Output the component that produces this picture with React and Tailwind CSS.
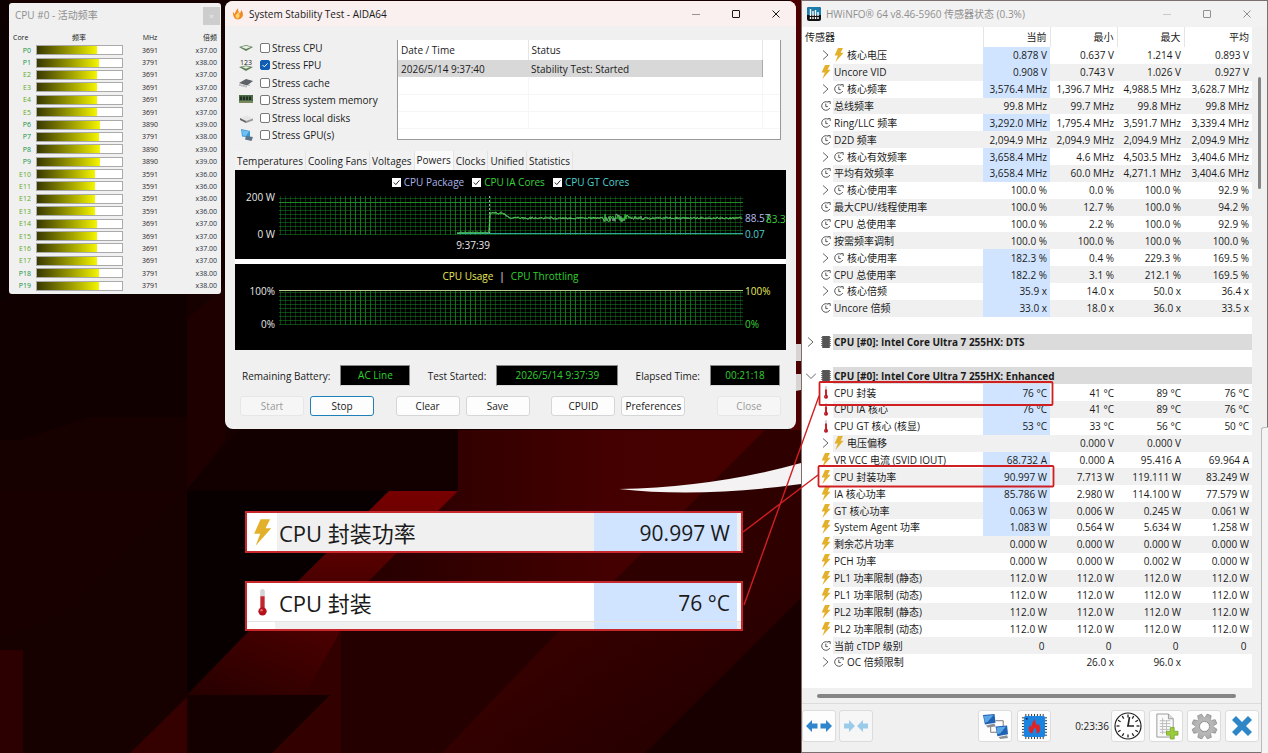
import React, { useState } from 'react';

const cores = [
  ['P0', 3691], ['P1', 3791], ['E2', 3691], ['E3', 3691], ['E4', 3691],
  ['E5', 3691], ['P6', 3890], ['P7', 3791], ['P8', 3890], ['P9', 3890],
  ['E10', 3591], ['E11', 3591], ['E12', 3591], ['E13', 3591], ['E14', 3691],
  ['E15', 3691], ['E16', 3691], ['E17', 3691], ['P18', 3791], ['P19', 3791],
];

// group: expandable child row, section: device header, hot: highlighted current value
const sensors = [
  { icon: 'bolt', name: '核心电压', v: ['0.878 V', '0.637 V', '1.214 V', '0.893 V'], group: true, hot: true },
  { icon: 'bolt', name: 'Uncore VID', v: ['0.908 V', '0.743 V', '1.026 V', '0.927 V'], hot: true },
  { icon: 'clock', name: '核心频率', v: ['3,576.4 MHz', '1,396.7 MHz', '4,988.5 MHz', '3,628.7 MHz'], group: true, hot: true },
  { icon: 'clock', name: '总线频率', v: ['99.8 MHz', '99.7 MHz', '99.8 MHz', '99.8 MHz'] },
  { icon: 'clock', name: 'Ring/LLC 频率', v: ['3,292.0 MHz', '1,795.4 MHz', '3,591.7 MHz', '3,339.4 MHz'], hot: true },
  { icon: 'clock', name: 'D2D 频率', v: ['2,094.9 MHz', '2,094.9 MHz', '2,094.9 MHz', '2,094.9 MHz'] },
  { icon: 'clock', name: '核心有效频率', v: ['3,658.4 MHz', '4.6 MHz', '4,503.5 MHz', '3,404.6 MHz'], group: true, hot: true },
  { icon: 'clock', name: '平均有效频率', v: ['3,658.4 MHz', '60.0 MHz', '4,271.1 MHz', '3,404.6 MHz'], hot: true },
  { icon: 'clock', name: '核心使用率', v: ['100.0 %', '0.0 %', '100.0 %', '92.9 %'], group: true },
  { icon: 'clock', name: '最大CPU/线程使用率', v: ['100.0 %', '12.7 %', '100.0 %', '94.2 %'] },
  { icon: 'clock', name: 'CPU 总使用率', v: ['100.0 %', '2.2 %', '100.0 %', '92.9 %'] },
  { icon: 'clock', name: '按需频率调制', v: ['100.0 %', '100.0 %', '100.0 %', '100.0 %'] },
  { icon: 'clock', name: '核心使用率', v: ['182.3 %', '0.4 %', '229.3 %', '169.5 %'], group: true, hot: true },
  { icon: 'clock', name: 'CPU 总使用率', v: ['182.2 %', '3.1 %', '212.1 %', '169.5 %'], hot: true },
  { icon: 'clock', name: '核心倍频', v: ['35.9 x', '14.0 x', '50.0 x', '36.4 x'], group: true, hot: true },
  { icon: 'clock', name: 'Uncore 倍频', v: ['33.0 x', '18.0 x', '36.0 x', '33.5 x'], hot: true },
  { blank: true },
  { section: 'closed', name: 'CPU [#0]: Intel Core Ultra 7 255HX: DTS' },
  { blank: true },
  { section: 'open', name: 'CPU [#0]: Intel Core Ultra 7 255HX: Enhanced' },
  { icon: 'temp', name: 'CPU 封装', v: ['76 °C', '41 °C', '89 °C', '76 °C'], hot: true },
  { icon: 'temp', name: 'CPU IA 核心', v: ['76 °C', '41 °C', '89 °C', '76 °C'], hot: true },
  { icon: 'temp', name: 'CPU GT 核心 (核显)', v: ['53 °C', '33 °C', '56 °C', '50 °C'], hot: true },
  { icon: 'bolt', name: '电压偏移', v: ['', '0.000 V', '0.000 V', ''], group: true },
  { icon: 'bolt', name: 'VR VCC 电流 (SVID IOUT)', v: ['68.732 A', '0.000 A', '95.416 A', '69.964 A'], hot: true },
  { icon: 'bolt', name: 'CPU 封装功率', v: ['90.997 W', '7.713 W', '119.111 W', '83.249 W'], hot: true },
  { icon: 'bolt', name: 'IA 核心功率', v: ['85.786 W', '2.980 W', '114.100 W', '77.579 W'], hot: true },
  { icon: 'bolt', name: 'GT 核心功率', v: ['0.063 W', '0.006 W', '0.245 W', '0.061 W'], hot: true },
  { icon: 'bolt', name: 'System Agent 功率', v: ['1.083 W', '0.564 W', '5.634 W', '1.258 W'], hot: true },
  { icon: 'bolt', name: '剩余芯片功率', v: ['0.000 W', '0.000 W', '0.000 W', '0.000 W'] },
  { icon: 'bolt', name: 'PCH 功率', v: ['0.000 W', '0.000 W', '0.002 W', '0.000 W'] },
  { icon: 'bolt', name: 'PL1 功率限制 (静态)', v: ['112.0 W', '112.0 W', '112.0 W', '112.0 W'] },
  { icon: 'bolt', name: 'PL1 功率限制 (动态)', v: ['112.0 W', '112.0 W', '112.0 W', '112.0 W'] },
  { icon: 'bolt', name: 'PL2 功率限制 (静态)', v: ['112.0 W', '112.0 W', '112.0 W', '112.0 W'] },
  { icon: 'bolt', name: 'PL2 功率限制 (动态)', v: ['112.0 W', '112.0 W', '112.0 W', '112.0 W'] },
  { icon: 'clock', name: '当前 cTDP 级别', v: ['0 ', '0 ', '0 ', '0 '] },
  { icon: 'clock', name: 'OC 倍频限制', v: ['', '26.0 x', '96.0 x', ''], group: true },
  { blank: true },
];

/* ---------- small icons ---------- */

const Bolt = ({ className = 'h-[14px] w-[10px]' }) => (
  <svg viewBox="0 0 10 14" className={className}>
    <path d="M4 0 H9 L6.6 4.8 H9.6 L1.4 14 L3.8 7.6 H0.6 Z" fill="#e3b02c" />
  </svg>
);

const ClockArrow = () => (
  <svg viewBox="0 0 10 10" className="h-[10px] w-[10px]" fill="none" stroke="#444" strokeWidth="0.9">
    <path d="M8.8 7 A4.3 4.3 0 1 1 7.2 1.3" />
    <path d="M4.8 2.6 V5.6 H6.8 M6.8 0.6 H9.2 V3" />
  </svg>
);

const Thermo = ({ className = 'h-[13px] w-[10px]' }) => (
  <svg viewBox="0 0 10 26" className={className} preserveAspectRatio="xMidYMid meet">
    <rect x="2.8" y="0" width="4.4" height="20" rx="2.2" fill="#d4d4d4" />
    <rect x="3" y="7" width="4" height="14" fill="#c4262b" />
    <circle cx="5" cy="21.5" r="4" fill="#b5121b" />
    <circle cx="4" cy="20.5" r="1.2" fill="#e56a6e" />
  </svg>
);

const Chip = () => (
  <svg viewBox="0 0 10 12" className="h-[12px] w-[10px]">
    <path d="M0 1.5H10M0 3.5H10M0 5.5H10M0 7.5H10M0 9.5H10" stroke="#888" />
    <rect x="1.2" y="0" width="7.6" height="12" fill="#555" />
  </svg>
);

const Chevron = ({ open }) => (
  <svg viewBox="0 0 10 10" className="h-[10px] w-[10px]" fill="none" stroke="#555" strokeWidth="0.9">
    <path d={open ? 'M0 2.5 L5 7.5 L10 2.5' : 'M2 0.5 L7 5 L2 9.5'} />
  </svg>
);

const icons = { bolt: <Bolt />, clock: <ClockArrow />, temp: <Thermo /> };

const WindowButtons = ({ color, dim }) => (
  <div className="ml-auto flex self-stretch">
    {[
      ['Minimize', 'M1 5.5 H9', true],
      ['Maximize', 'M2 1.5 H8 Q8.5 1.5 8.5 2 V8 Q8.5 8.5 8 8.5 H2 Q1.5 8.5 1.5 8 V2 Q1.5 1.5 2 1.5 Z', false],
      ['Close', 'M1.5 1.5 L8.5 8.5 M8.5 1.5 L1.5 8.5', false],
    ].map(([label, d, faint]) => (
      <button key={label} aria-label={label} className="flex w-10 items-center justify-center">
        <svg viewBox="0 0 10 10" className="h-[10px] w-[10px]" fill="none" stroke={faint ? dim : color}>
          <path d={d} />
        </svg>
      </button>
    ))}
  </div>
);

/* ---------- wallpaper ---------- */

const Wallpaper = () => (
  <svg className="absolute inset-0 h-full w-full" viewBox="0 0 1268 753" preserveAspectRatio="xMinYMin slice">
    <defs>
      <linearGradient id="wallRight" x1="0" y1="0" x2="1" y2="1">
        <stop offset="0" stopColor="#2c0000" />
        <stop offset="0.4" stopColor="#3e0000" />
        <stop offset="1" stopColor="#1e0000" />
      </linearGradient>
      <linearGradient id="wallUpper" x1="0" y1="0" x2="1" y2="0">
        <stop offset="0" stopColor="#260000" />
        <stop offset="0.6" stopColor="#440000" />
        <stop offset="1" stopColor="#460000" />
      </linearGradient>
      <linearGradient id="wallBand" x1="0" y1="0" x2="0" y2="1">
        <stop offset="0" stopColor="#780000" />
        <stop offset="1" stopColor="#4a0000" />
      </linearGradient>
      <linearGradient id="wallLow" x1="1" y1="0" x2="0" y2="1">
        <stop offset="0" stopColor="#4c0000" />
        <stop offset="1" stopColor="#260000" />
      </linearGradient>
    </defs>
    <rect width="1268" height="753" fill="#160000" />
    <path d="M0 294 H187 V417 H90 L20 440 H0 Z" fill="#110000" />
    <path d="M187 320 L225 285 V440 L187 490 Z" fill="#1e0000" />
    <path d="M20 490 H185 L70 610 L0 640 V490 Z" fill="#190000" />
    <path d="M187 490 L240 430 H458 V490 L187 700 Z" fill="#0d0000" />
    <rect x="341" y="430" width="460" height="323" fill="url(#wallRight)" />
    <path d="M240 430 H458 V491 H187 Z" fill="#120000" />
    <path d="M187 491 H389 L187 692 Z" fill="#080000" />
    <path d="M389 491 H458 L368 582 H297 Z" fill="url(#wallBand)" />
    <path d="M458 491 V430 H765 L610 585 H365 Z" fill="url(#wallUpper)" />
    <path d="M765 430 H801 V560 L745 600 L610 585 Z" fill="#2e0000" />
    <path d="M250 630 H341 V695 H187 Z" fill="url(#wallLow)" />
    <path d="M341 630 V753 H272 Z" fill="#330000" />
    <path d="M187 695 H330 L272 753 H187 Z" fill="#150000" />
    <path d="M187 697 V753 H130 Z" fill="#340000" />
    <path d="M341 630 H560 L442 753 H341 Z" fill="#240000" />
    <path d="M645 753 L801 598 V753 Z" fill="#190000" />
    <rect x="0" y="650" width="23" height="103" fill="#2c0000" />
    <rect x="0" y="0" width="9" height="300" fill="#0c0000" />
    <rect x="790" y="0" width="12" height="430" fill="#4c0000" />
    <path d="M619 489 Q715 487 801 463 V484 Q700 498 619 489 Z" fill="#f4f2f2" />
    <path d="M790 344 H801 V361 H790 Z M790 374 H801 V390 L790 392 Z" fill="#d8d4d4" />
  </svg>
);

/* ---------- CPU frequency window ---------- */

const CpuWindow = () => (
  <section className="absolute left-[9px] top-[3px] w-[212px] overflow-hidden rounded-[3px] bg-[#f0f0f0] pb-[2px]">
    <header className="flex h-6 items-center pl-[6px] text-[10px] text-[#8f8f8f]">
      CPU #0 - 活动频率
      <button aria-label="Close" className="ml-auto mr-[1px] mt-[2px] h-[18px] w-[17px] bg-[#cdcdcd] text-[8px] text-[#eee]">×</button>
    </header>
    <table className="h-[265px] w-full table-fixed border-collapse text-[7px] leading-[9px]">
      <thead>
        <tr className="h-[17px]">
          <th className="w-[24px] pt-1 pl-1 text-left font-normal">Core</th>
          <th className="w-[92px] pt-1 font-normal">频率</th>
          <th className="w-[50px] pt-1 font-normal">MHz</th>
          <th className="pt-1 pr-1 text-right font-normal">倍频</th>
        </tr>
      </thead>
      <tbody>
        {cores.map(([name, mhz]) => (
          <tr key={name}>
            <td className={`p-0 pr-[2px] text-right ${name[0] === 'P' ? 'text-[#14913f]' : 'text-[#66a81e]'}`}>{name}</td>
            <td className="p-0 pl-[3px] pr-[2px]">
              <div className="h-[10px] border border-[#aaa] bg-white">
                <div
                  className="h-full bg-linear-to-r from-[#3a3a00] to-[#f6f600]"
                  style={{ width: `${(mhz / 5230) * 100}%` }}
                />
              </div>
            </td>
            <td className="p-0 text-center text-[#2b2222]">{mhz}</td>
            <td className="p-0 pr-1 text-right text-[#2b3040]">x{Math.round(mhz / 99.8)}.00</td>
          </tr>
        ))}
      </tbody>
    </table>
  </section>
);

/* ---------- stability test window ---------- */

const stressIcons = {
  cpu: <><path d="M1 6 L8 4 L15 6 L8 10 Z" fill="#5d7f56" /><path d="M3 6 L8 4.8 L13 6 L8 8 Z" fill="#e8eee4" /></>,
  fpu: <><text x="8" y="6.5" fontSize="7" textAnchor="middle" fill="#222">123</text><path d="M1 9 L8 7.5 L15 9 L8 13 Z" fill="#5d7f56" /><path d="M4 9 L8 8.2 L12 9 L8 10.8 Z" fill="#e8eee4" /></>,
  cache: <><path d="M1 7 L8 3 L15 5 L9 9.5 Z" fill="#5c6268" /><path d="M2 8 V10 M4 8.6 V10.6 M6 9 V11 M8 9.6 V11.4 M11 8.4 V10" stroke="#8b9096" /></>,
  memory: <><rect x="1" y="2" width="14" height="8" fill="#4a6a48" /><path d="M3 3.5V7M6 3.5V7M9 3.5V7M12 3.5V7" stroke="#1f2a1e" strokeWidth="1.8" /><path d="M1 9H15" stroke="#a9a871" /></>,
  disk: <><path d="M2 7 L9 4.5 L15 7.5 L8 10 Z" fill="#e5e5e5" /><path d="M2 7 L8 10 V12 L2 9 Z" fill="#666" /><path d="M8 10 L15 7.5 V9.5 L8 12 Z" fill="#999" /></>,
  gpu: <><path d="M3 1 L12 3 L12 9.5 L4 8.5 Z" fill="#3c97d8" /><path d="M4 2 L11 3.6 L8 8 L4.6 7.6 Z" fill="#6fc0f0" /><path d="M8 8 L15 9 L13.5 13 L7 11.5 Z" fill="#5e7488" /></>,
};

const StressOption = ({ id, label, checked }) => {
  const [on, setOn] = useState(checked);
  return (
    <label className="flex flex-1 items-center whitespace-nowrap">
      <svg viewBox="0 0 16 14" className="h-[14px] w-[16px]">{stressIcons[id]}</svg>
      <input
        type="checkbox"
        checked={on}
        onChange={() => setOn(!on)}
        className="peer ml-[6px] h-[10px] w-[10px] appearance-none rounded-[2px] border border-[#777] bg-white checked:border-[#0f5db4] checked:bg-[#0f5db4]"
      />
      <svg viewBox="0 0 10 10" className="-ml-[10px] hidden h-[10px] w-[10px] peer-checked:block" fill="none" stroke="#fff">
        <path d="M2.5 5 L4.3 6.8 L7.6 3.4" />
      </svg>
      <span className="ml-[2px]">{label}</span>
    </label>
  );
};

const ChartToggle = ({ label, color }) => (
  <label className={`flex items-center gap-[3px] ${color}`}>
    <span className="relative flex">
      <input type="checkbox" defaultChecked className="h-[9px] w-[9px] appearance-none bg-white" />
      <svg viewBox="0 0 9 9" className="pointer-events-none absolute inset-0 h-[9px] w-[9px]" fill="none" stroke="#222">
        <path d="M1.8 4.5 L3.8 6.6 L7.4 2.4" />
      </svg>
    </span>
    {label}
  </label>
);

const Grid = ({ top, bottom }) => {
  const vertical = [];
  for (let x = 45; x < 508; x += 5) {
    const o = 0.35 + 0.5 * Math.pow(Math.cos(((x - 123) / 107) * Math.PI), 4);
    vertical.push(<path key={`v${x}`} d={`M${x}.5 ${top} V${bottom}`} strokeOpacity={o} />);
  }
  const horizontal = [];
  for (let y = bottom; y > top; y -= 4) {
    horizontal.push(<path key={`h${y}`} d={`M44 ${y - 0.5} H508`} strokeOpacity="0.5" />);
  }
  return <g stroke="#178a26">{vertical}{horizontal}</g>;
};

// package power history: idle, spike at test start, then steady load
const powerLine = (shift) => {
  let d = 'M222 42';
  for (let x = 224; x < 255; x += 2) d += ` L${x} ${42 - (x % 4 ? 1 : 0)}`;
  for (let x = 255; x < 508; x += 1) {
    const noise = Math.sin(x * 12.9898 + shift) * 43758.5453;
    const r = noise - Math.floor(noise) - 0.5;
    const base = x < 267 ? 22 : x < 275 ? 22 + (x - 267) * 0.6 : 27;
    const amp = x > 368 && x < 394 ? 8 : x > 394 && x < 410 ? 4 : 2.4;
    d += ` L${x} ${(base + r * amp).toFixed(1)}`;
  }
  return d;
};

const PowerChart = () => (
  <svg viewBox="0 0 551 68" className="block w-full" fontSize="10" fill="none">
    <Grid top={5} bottom={44} />
    <path d="M44 11.5 H508" stroke="#1c9a2a" strokeOpacity="0.8" />
    <path d="M254.5 5 V43" stroke="#cfd8cf" strokeDasharray="2 2" strokeOpacity="0.8" />
    <path d="M222 42.5 H508" stroke="#2fa79a" />
    <path d={powerLine(0)} stroke="#a5c7b0" strokeWidth="0.7" />
    <path d={powerLine(1.4)} stroke="#35d13d" strokeWidth="0.8" />
    <g fill="#e8e8e8" textAnchor="end">
      <text x="40" y="10">200 W</text>
      <text x="40" y="47">0 W</text>
      <text x="255" y="58">9:37:39</text>
    </g>
    <text x="510" y="31" fill="#b4bdf2">88.57</text>
    <text x="531" y="32" fill="#3bd13b">83.39</text>
    <text x="510" y="47" fill="#4fd0d0">0.07</text>
  </svg>
);

const UsageChart = () => (
  <svg viewBox="0 0 551 65" className="block w-full" fontSize="10" fill="none">
    <Grid top={6} bottom={40} />
    <path d="M44 5.5 H508" stroke="#b9c98a" />
    <g fill="#e8e8e8" textAnchor="end">
      <text x="40" y="10">100%</text>
      <text x="40" y="43">0%</text>
    </g>
    <text x="510" y="10" fill="#e8e85a">100%</text>
    <text x="510" y="43" fill="#3bd13b">0%</text>
  </svg>
);

const tabs = ['Temperatures', 'Cooling Fans', 'Voltages', 'Powers', 'Clocks', 'Unified', 'Statistics'];

const Readout = ({ label, value, width }) => (
  <div className="flex items-center gap-[10px]">
    <span>{label}</span>
    <output className={`border border-[#888] border-b-[#ddd] bg-black text-center leading-[19px] text-[#2fd12f] ${width}`}>{value}</output>
  </div>
);

const PushButton = ({ children, border = 'border-[#d6d6d6]', ...rest }) => (
  <button
    className={`h-5 w-16 rounded-[3px] border bg-[#fdfdfd] disabled:border-[#e6e6e6] disabled:bg-[#f6f6f6] disabled:text-[#9a9a9a] ${border}`}
    {...rest}
  >
    {children}
  </button>
);

const StabilityWindow = () => {
  const [tab, setTab] = useState('Powers');
  return (
    <section className="absolute left-[225px] top-[1px] w-[571px] overflow-hidden rounded-lg bg-[#f0f0f0] text-[10px] leading-[14px] text-[#1a1a1a]">
      <header className="flex h-[25px] items-center bg-[#f9f0ef]">
        <svg viewBox="0 0 14 14" className="ml-[7px] mr-[5px] h-[13px] w-[12px]">
          <path d="M1 5 Q3 7 3 8 Q4 4 7 1 Q7 5 9 7 Q10 6 11 3 Q14 8 12 11 Q10 14 6 14 Q1 13 1 5Z" fill="#f08a24" />
          <path d="M4 9 Q6 8 7 5 Q9 8 9 10 Q8 13 6 13 Q4 12 4 9Z" fill="#ffd36b" />
        </svg>
        <h1>System Stability Test - AIDA64</h1>
        <WindowButtons color="#1a1a1a" dim="#9a9292" />
      </header>

      <div className="flex justify-between pl-[13px] pr-[15px] pt-[13px]">
        <div className="flex h-[105px] flex-col">
          <StressOption id="cpu" label="Stress CPU" checked={false} />
          <StressOption id="fpu" label="Stress FPU" checked />
          <StressOption id="cache" label="Stress cache" checked={false} />
          <StressOption id="memory" label="Stress system memory" checked={false} />
          <StressOption id="disk" label="Stress local disks" checked={false} />
          <StressOption id="gpu" label="Stress GPU(s)" checked={false} />
        </div>
        <div className="mt-[1px] h-[100px] w-[384px] border border-t-0 border-[#999] bg-white">
          <table className="w-full table-fixed border-collapse text-left">
            <thead>
              <tr className="h-5">
                <th className="w-[130px] border-r border-[#e5e5e5] pl-[3px] font-normal">Date / Time</th>
                <th className="border-r border-[#e5e5e5] pl-[3px] font-normal">Status</th>
                <th className="w-[18px]"></th>
              </tr>
            </thead>
            <tbody>
              <tr className="h-[17px]">
                <td className="bg-[#d8d8d8] pl-[3px]">2026/5/14 9:37:40</td>
                <td className="border-r border-[#aaa] bg-[#d8d8d8] pl-[3px]">Stability Test: Started</td>
                <td></td>
              </tr>
              {[0, 1, 2].map((i) => (
                <tr key={i} className="h-[17px] border-b border-[#f6f6f6]">
                  <td className="border-r border-[#f6f6f6]"></td>
                  <td className="border-r border-[#f6f6f6]"></td>
                  <td></td>
                </tr>
              ))}
            </tbody>
          </table>
        </div>
      </div>

      <div className="mx-[10px] mt-[7px]">
        <div role="tablist" className="flex h-[19px] items-stretch">
          {tabs.map((t) => (
            <button
              key={t}
              role="tab"
              aria-selected={t === tab}
              onClick={() => setTab(t)}
              className={`border-r border-[#e4e4e4] px-[2px] ${t === tab ? 'bg-[#fafafa] pb-[2px]' : 'bg-[#f2f2f2]'}`}
            >
              {t}
            </button>
          ))}
        </div>
        <div className="bg-black">
          <div className="flex h-[21px] items-end justify-center gap-2 pb-[2px]">
            <ChartToggle label="CPU Package" color="text-[#a9b4e8]" />
            <ChartToggle label="CPU IA Cores" color="text-[#3bd13b]" />
            <ChartToggle label="CPU GT Cores" color="text-[#4fd0d0]" />
          </div>
          <PowerChart />
        </div>
        <div className="h-[5px] bg-white" />
        <div className="bg-black">
          <div className="flex h-[21px] items-end justify-center gap-[6px] pb-[2px]">
            <span className="text-[#e8e85a]">CPU Usage</span>
            <span className="text-white">|</span>
            <span className="text-[#2fd12f]">CPU Throttling</span>
          </div>
          <UsageChart />
        </div>
      </div>

      <div className="mt-[15px] flex justify-between pl-[17px] pr-[16px]">
        <Readout label="Remaining Battery:" value="AC Line" width="w-[70px]" />
        <Readout label="Test Started:" value="2026/5/14 9:37:39" width="w-[122px]" />
        <Readout label="Elapsed Time:" value="00:21:18" width="w-[70px]" />
      </div>

      <div className="mb-[13px] mt-[10px] flex justify-between pl-[15px] pr-[15px]">
        <div className="flex gap-[6px]">
          <PushButton disabled>Start</PushButton>
          <PushButton border="border-[#1f7fb8]">Stop</PushButton>
        </div>
        <div className="flex gap-[6px]">
          <PushButton>Clear</PushButton>
          <PushButton>Save</PushButton>
        </div>
        <div className="mr-[10px] flex gap-[6px]">
          <PushButton>CPUID</PushButton>
          <PushButton>Preferences</PushButton>
        </div>
        <PushButton disabled>Close</PushButton>
      </div>
    </section>
  );
};

/* ---------- sensor window ---------- */

const SensorRow = ({ row, striped }) => {
  if (row.blank) {
    return <tr><td colSpan={6} className="p-0">&nbsp;</td></tr>;
  }
  if (row.section) {
    return (
      <tr>
        <td className="p-0">
          <div className="flex items-center justify-between pl-1 pr-[2px]">
            <Chevron open={row.section === 'open'} />
            <Chip />
          </div>
        </td>
        <td colSpan={5} className="bg-[#dbdbdb] p-0 pl-[1px] font-bold">{row.name}</td>
      </tr>
    );
  }
  const stripe = striped ? 'bg-[#f0f0f0]' : '';
  return (
    <tr>
      <td className="p-0">
        <div className="flex justify-end pr-[2px]">{row.group ? <Chevron /> : icons[row.icon]}</div>
      </td>
      <td className={`whitespace-nowrap p-0 pl-[1px] ${stripe}`}>
        <div className="flex items-center gap-[3px]">
          {row.group && icons[row.icon]}
          <span>{row.name}</span>
        </div>
      </td>
      {row.v.map((value, i) => (
        <td key={i} className={`whitespace-pre p-0 pr-[3px] text-right ${i === 0 && row.hot ? 'bg-[#d0e4ff]' : stripe}`}>
          {value}
        </td>
      ))}
    </tr>
  );
};

const ToolButton = ({ label, children, faded }) => (
  <button
    aria-label={label}
    className={`flex h-8 w-[34px] items-center justify-center rounded-[3px] border border-[#dcdcdc] ${faded ? 'bg-[#f6f6f6]' : 'bg-[#fdfdfd]'}`}
  >
    {children}
  </button>
);

const ticks = [0, 30, 60, 90, 120, 150, 180, 210, 240, 270, 300, 330];
const teeth = [0, 45, 90, 135, 180, 225, 270, 315];

const Toolbar = () => (
  <footer className="flex items-center border-t border-[#dcdcdc] bg-[#f0f0f0] pb-[10px] pr-2 pt-[6px] text-[10px]">
    <div className="flex gap-[3px]">
      <ToolButton label="Expand columns">
        <svg viewBox="0 0 26 14" className="h-[14px] w-[26px]" fill="#2f86cc">
          <path d="M0 7 L6 1 V4.5 H11.5 V9.5 H6 V13 Z M26 7 L20 1 V4.5 H14.5 V9.5 H20 V13 Z" />
        </svg>
      </ToolButton>
      <ToolButton label="Shrink columns" faded>
        <svg viewBox="0 0 26 14" className="h-[14px] w-[26px]" fill="#9ccbea">
          <path d="M12 7 L6 1 V4.5 H1 V9.5 H6 V13 Z M14 7 L20 1 V4.5 H25 V9.5 H20 V13 Z" />
        </svg>
      </ToolButton>
    </div>
    <div className="ml-auto flex gap-[5px]">
      <ToolButton label="Remote sensors">
        <svg viewBox="0 0 28 28" className="h-[27px] w-[27px]">
          <path d="M14 8 H22 V14 M9 14 V20 H16" stroke="#777" fill="none" />
          <path d="M1 2 L13 1 L14 10 L3 12 Z" fill="#1f62b4" />
          <path d="M2 3 L12 2 L6 9 L3 10 Z" fill="#5aa5e6" />
          <path d="M4 13 L13 11 L14 14 L6 15 Z" fill="#8a8f96" />
          <path d="M14 14 L26 13 L27 22 L16 24 Z" fill="#1f62b4" />
          <path d="M15 15 L25 14 L19 21 L16 22 Z" fill="#5aa5e6" />
          <path d="M17 25 L26 23 L27 26 L19 27 Z" fill="#8a8f96" />
        </svg>
      </ToolButton>
      <ToolButton label="CPU stress">
        <svg viewBox="0 0 28 28" className="h-[27px] w-[27px]">
          <path d="M5 1V27M8 1V27M11 1V27M14 1V27M17 1V27M20 1V27M23 1V27M1 5H27M1 8H27M1 11H27M1 14H27M1 17H27M1 20H27M1 23H27" stroke="#333" strokeWidth="1" />
          <rect x="3" y="3" width="22" height="22" rx="2" fill="#1a84e0" />
          <circle cx="6" cy="6" r="1" fill="#0b2a4a" />
          <path d="M10 21 Q6 17 10 12 L11 15 Q11 10 14 6 Q15 11 17 13 L18 11 Q22 17 18 21 L16 21 Q17 18 14 15 Q12 19 12 21 Z" fill="#e02424" />
        </svg>
      </ToolButton>
    </div>
    <span className="ml-6 mr-[2px]">0:23:36</span>
    <div className="flex gap-1">
      <ToolButton label="Reset timer">
        <svg viewBox="0 0 28 28" className="h-[28px] w-[28px]" fill="none" stroke="#222">
          <circle cx="14" cy="14" r="13" strokeWidth="1.2" fill="#fff" />
          {ticks.map((a) => (
            <path key={a} d="M14 2.5 V5.5" transform={`rotate(${a} 14 14)`} strokeWidth="1.3" />
          ))}
          <path d="M14 14 L15.5 5 M13 14 H20" strokeWidth="1.6" />
        </svg>
      </ToolButton>
      <ToolButton label="Start logging">
        <svg viewBox="0 0 26 28" className="h-[27px] w-[25px]">
          <path d="M3 1 H15 L20 6 V25 H3 Z" fill="#fafafa" stroke="#999" />
          <path d="M15 1 V6 H20" fill="#ddd" stroke="#999" />
          <path d="M6 8H17M6 11H17M6 14H17M6 17H17M6 20H17M9 5V22M13 8V22" stroke="#bbb" />
          <path d="M17 15 H21 V19 H25 V23 H21 V27 H17 V23 H13 V19 H17 Z" fill="#9ccb3c" stroke="#6f9c20" strokeWidth="0.7" />
        </svg>
      </ToolButton>
      <ToolButton label="Settings">
        <svg viewBox="0 0 28 28" className="h-[27px] w-[27px]">
          <g fill="#b0b0b0" stroke="#808080" strokeWidth="0.6">
            {teeth.map((a) => (
              <path key={a} d="M10.8 6 L11.8 1 H16.2 L17.2 6 Z" transform={`rotate(${a + 22} 14 14)`} />
            ))}
          </g>
          <circle cx="14" cy="14" r="7.6" fill="none" stroke="#b6b6b6" strokeWidth="4.6" />
          <circle cx="14" cy="14" r="5.2" fill="#fdfdfd" stroke="#777" strokeWidth="0.8" />
        </svg>
      </ToolButton>
      <ToolButton label="Close sensors">
        <svg viewBox="0 0 22 22" className="h-[22px] w-[22px]">
          <path d="M5 1 L11 7 L17 1 L21 5 L15 11 L21 17 L17 21 L11 15 L5 21 L1 17 L7 11 L1 5 Z" fill="#2f86c6" />
        </svg>
      </ToolButton>
    </div>
  </footer>
);

const SensorWindow = () => (
  <section className="absolute bottom-0 left-[801px] right-0 top-0 flex flex-col border border-[#7b6f70] bg-[#f0f0f0] text-[10px] leading-[14px] text-[#1a1a1a]">
    <header className="flex h-[26px] shrink-0 items-center bg-[#f2f2f2] text-[#8f8f8f]">
      <svg viewBox="0 0 14 14" className="ml-[5px] mr-[5px] h-[14px] w-[14px]">
        <rect width="14" height="14" rx="2" fill="#111" />
        <path d="M0 2 Q0 0 2 0 H12 Q14 0 14 2 V8 H0 Z" fill="#1b7dab" />
        <path d="M3.5 2V9M6 4V9M8.5 3V9M11 5V9M3.5 10V12M6 10V12M8.5 10V12M11 10V12" stroke="#fff" strokeWidth="1.4" />
      </svg>
      <h2>HWiNFO® 64 v8.46-5960 传感器状态 (0.3%)</h2>
      <WindowButtons color="#8f8f8f" dim="#c8c8c8" />
    </header>

    <div className="flex">
      <table className="h-[661px] flex-1 table-fixed border-collapse bg-white">
        <colgroup>
          <col className="w-[31px]" />
          <col />
          <col className="w-[67px]" />
          <col className="w-[67px]" />
          <col className="w-[67px]" />
          <col className="w-[68px]" />
        </colgroup>
        <thead>
          <tr className="h-[20px]">
            <th colSpan={2} className="border-r border-[#e5e5e5] p-0 pl-[3px] text-left font-normal">传感器</th>
            <th className="border-r border-[#e5e5e5] p-0 pr-[3px] text-right font-normal">当前</th>
            <th className="border-r border-[#e5e5e5] p-0 pr-[3px] text-right font-normal">最小</th>
            <th className="border-r border-[#e5e5e5] p-0 pr-[3px] text-right font-normal">最大</th>
            <th className="p-0 pr-[3px] text-right font-normal">平均</th>
          </tr>
        </thead>
        <tbody>
          {sensors.map((row, i) => (
            <SensorRow key={i} row={row} striped={i % 2 === 1} />
          ))}
        </tbody>
      </table>
      <div className="w-[15px] bg-[#f0f0f0] pt-[50px]">
        <div className="ml-[6px] h-[112px] w-[3px] rounded-full bg-[#858585]" />
      </div>
    </div>
    <div className="flex h-4 items-center pl-[15px] pr-[31px]">
      <div className="h-1 w-full rounded-full bg-[#858585]" />
    </div>
    <Toolbar />
    <div className="absolute -bottom-px -right-px top-[426px] w-[7px] rounded-tl-[3px] border-l border-t border-[#bbb] bg-[#f4f4f4]" />
  </section>
);

/* ---------- enlarged readings and callouts ---------- */

const Enlarged = ({ icon, label, value, tinted, children }) => (
  <div className="border-2 border-[#c8282c] bg-white">
    <div className={`flex h-[38px] items-stretch text-[22px] leading-[40px] ${tinted ? 'bg-[#f0f0f0]' : 'bg-white'}`}>
      <div className="flex w-[30px] items-center justify-center bg-white">{icon}</div>
      <div className="flex-1 pl-[2px]">{label}</div>
      <div className="w-[143px] bg-[#d0e4ff] pr-[7px] text-right text-[21px]">{value}</div>
      <div className="w-1" />
    </div>
    {children}
  </div>
);

const Callouts = () => (
  <svg className="pointer-events-none absolute left-0 top-0 h-[753px] w-[1268px]" viewBox="0 0 1268 753" fill="none" stroke="#d01f22" strokeWidth="1.4">
    <rect x="819.5" y="382" width="233" height="23" rx="1" strokeWidth="1.8" />
    <rect x="818.5" y="466" width="235" height="20.5" rx="1" strokeWidth="1.8" />
    <path d="M743 532 L818 475 M744 605 L819 396" />
  </svg>
);

export default function App() {
  return (
    <main className='relative h-screen min-h-[753px] overflow-hidden bg-[#160000] font-["Open_Sans","Noto_Sans_CJK_SC",sans-serif] text-[#1a1a1a]'>
      <Wallpaper />
      <CpuWindow />
      <StabilityWindow />
      <div className="absolute left-[245px] top-[511px] flex w-[498px] flex-col gap-7">
        <Enlarged tinted icon={<Bolt className="h-[29px] w-[19px]" />} label="CPU 封装功率" value="90.997 W" />
        <Enlarged icon={<Thermo className="h-[27px] w-[11px]" />} label="CPU 封装" value="76 °C">
          <div className="flex h-2 border-t border-[#e4e4e4] bg-[#f0f0f0]">
            <div className="w-[28px] bg-white" />
            <div className="ml-auto mr-1 w-[143px] bg-[#d0e4ff]" />
          </div>
        </Enlarged>
      </div>
      <SensorWindow />
      <Callouts />
    </main>
  );
}
